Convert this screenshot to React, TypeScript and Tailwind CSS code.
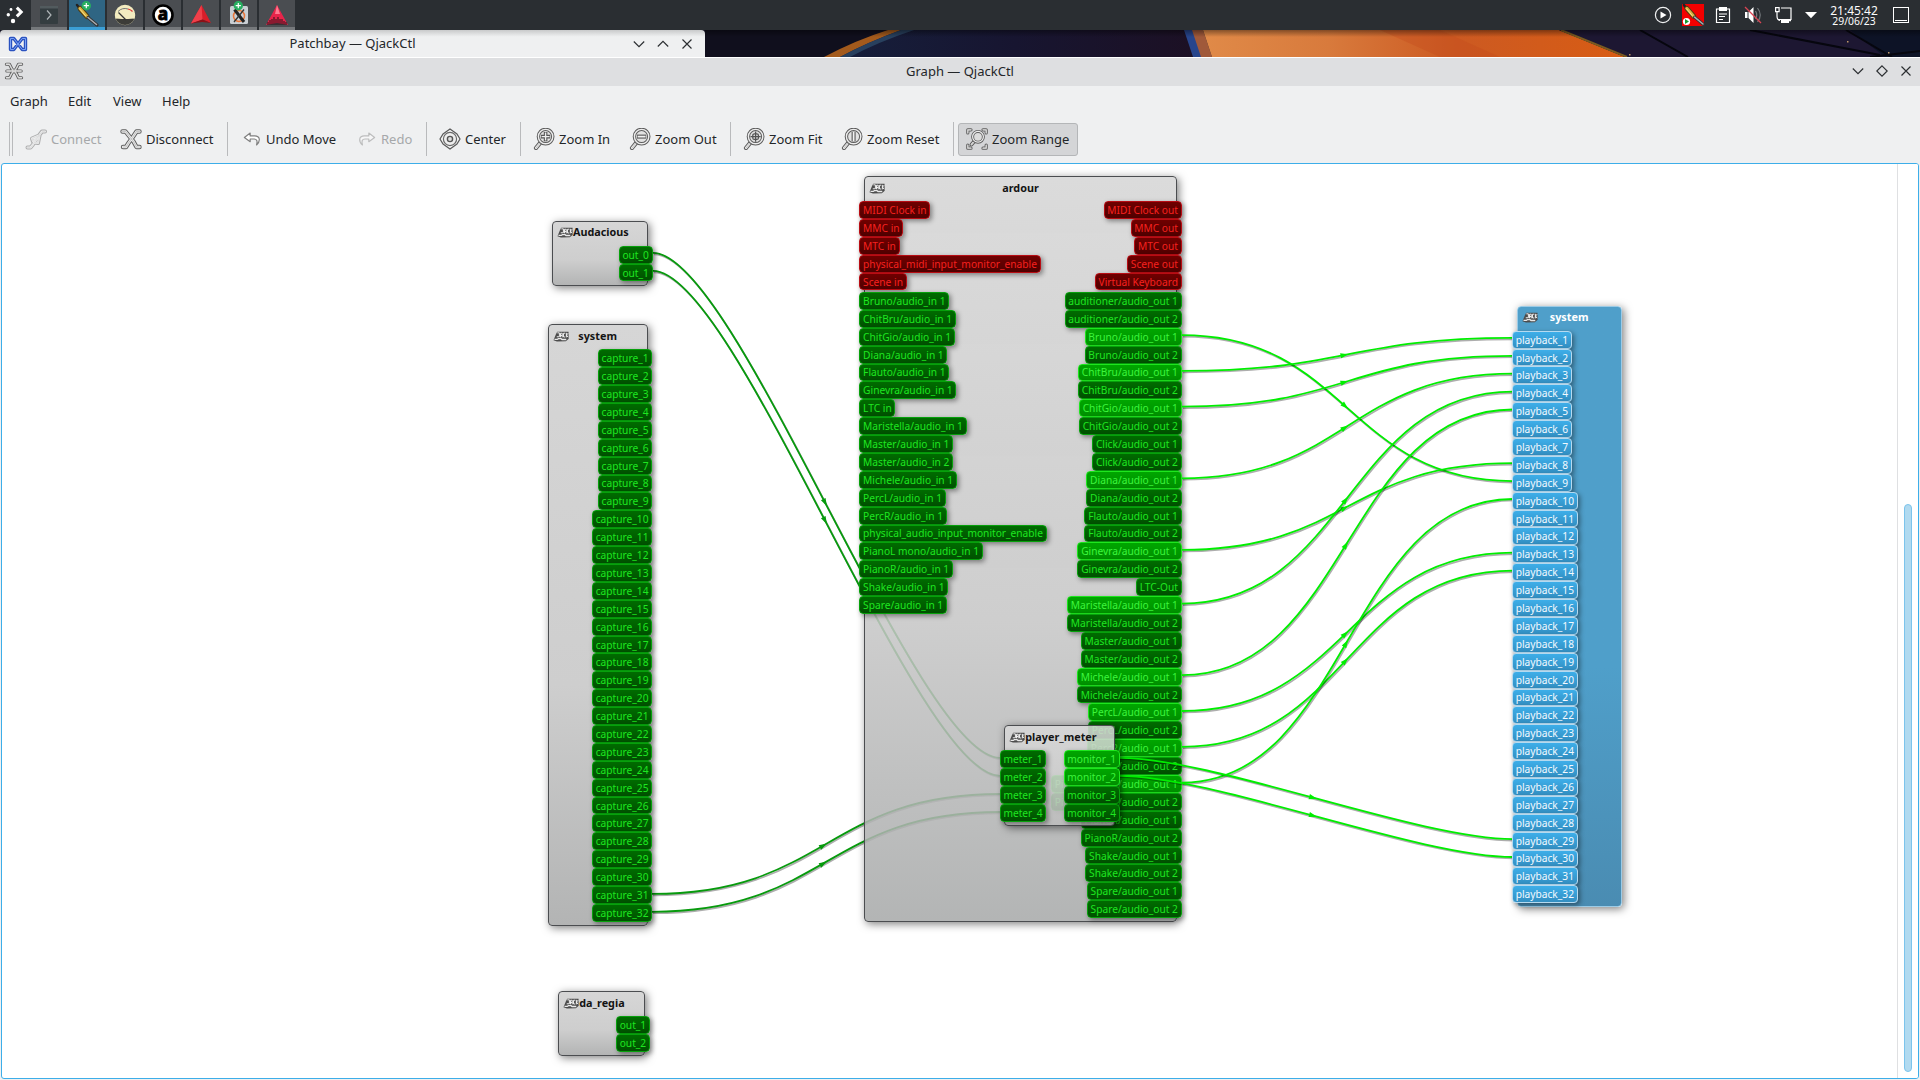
import React from "react";

type PortKind = "midi" | "audio" | "live" | "selected";
type Port = { name: string; kind: PortKind };

const ORIGIN_X = 2;
const ORIGIN_Y = 164;

const portStyle: Record<PortKind, string> = {
  midi: "border-[#b80d14] from-[#700000] to-[#500000] text-[#f6201f]",
  audio: "border-[#07a00c] from-[#006c00] to-[#005000] text-[#1fe621]",
  live: "border-[#1ee61e] from-[#00a600] to-[#009000] text-[#3df53d]",
  selected: "border-[#b5daf0] from-[#3daee9] to-[#338fc2] text-[#f4faff]",
};

const ports = (names: string[], kind: PortKind): Port[] => names.map((name) => ({ name, kind }));
const series = (prefix: string, from: number, to: number, kind: PortKind): Port[] =>
  Array.from({ length: to - from + 1 }, (_, i) => ({ name: `${prefix}${from + i}`, kind }));

const PORT_H = 17.9;

function PortBox({ port, gap }: { port: Port; gap: boolean }) {
  return (
    <div
      className={`box-border flex h-[17.9px] shrink-0 items-center whitespace-nowrap rounded-[4px] border bg-linear-to-b px-[2.7px] text-[10.2px] leading-[16px] shadow-[2px_2px_5px_rgba(0,0,0,0.42)] ${portStyle[port.kind]} ${gap ? "mt-[1.5px]" : ""}`}
    >
      {port.name}
    </div>
  );
}

function PortColumn({ list, side }: { list: Port[]; side: "left" | "right" }) {
  return (
    <div className={`flex w-1/2 flex-col ${side === "left" ? "items-start" : "items-end"}`}>
      {list.map((p, i) => (
        <PortBox key={p.name} port={p} gap={i > 0 && list[i - 1].kind === "midi" && p.kind !== "midi"} />
      ))}
    </div>
  );
}

function JackIcon() {
  return (
    <svg width="16" height="11" viewBox="0 0 17 11" className="shrink-0">
      <path d="M.5 9.600 3 3.500 4.500.4h12L16.700 8l-3 2.600-9.500.2Z" fill="#4c4c4c" />
      <path d="M4.600 1.600h2.200v4.200H4M8 6.400V2h1.800v4.400M8 4.400h1.800M13 2h-1.800v4h1.800M14.200 1.600v4.800M16 2l-1.600 2L16 6.200" fill="none" stroke="#fafafa" strokeWidth="1" />
      <path d="M1.600 8.600h3l1-.8h3l1 .9h4.500" fill="none" stroke="#e8e8e8" strokeWidth="1.400" />
    </svg>
  );
}

type NodeProps = {
  title: string;
  x: number;
  y: number;
  w: number;
  h: number;
  left?: Port[];
  right?: Port[];
  tone?: string;
  tight?: boolean;
};

function GraphNode({ title, x, y, w, h, left = [], right = [], tone, tight }: NodeProps) {
  const colours = tone ?? "border-[#4b4d50] from-[#d6d6d6] via-[#cecece] to-[#b3b4b4] text-[#141414]";
  return (
    <div
      className={`absolute rounded-[4px] border bg-linear-to-b via-60% shadow-[2px_2px_9px_rgba(0,0,0,0.5)] ${colours}`}
      style={{ left: x - ORIGIN_X, top: y - ORIGIN_Y, width: w, height: h }}
    >
      <div className="relative flex h-[24px] items-center pb-[2px] pl-[4px]">
        <JackIcon />
        {tight ? (
          <span className="text-[10.8px] font-bold leading-none">{title}</span>
        ) : (
          <span className="absolute inset-x-0 text-center text-[10.8px] font-bold leading-none">{title}</span>
        )}
      </div>
      <div className="-mx-[5.6px] flex">
        <PortColumn list={left} side="left" />
        <PortColumn list={right} side="right" />
      </div>
    </div>
  );
}

type Wire = [number, number, number, number];

function Wires({ wires, colour, bend = 0.5 }: { wires: Wire[]; colour: string; bend?: number }) {
  return (
    <svg className="absolute left-0 top-0" width="1916" height="914" viewBox="2 164 1916 914">
      {wires.map(([x0, y0, x1, y1]) => {
        const off = (x1 - x0) * bend;
        const d = `M${x0} ${y0}C${x0 + off} ${y0} ${x1 - off} ${y1} ${x1} ${y1}`;
        const angle = (Math.atan2(y1 - y0, (x1 - x0) * (1 - bend)) * 180) / Math.PI;
        return (
          <g key={d} fill="none">
            <path d={d} stroke="#000" strokeOpacity=".32" strokeWidth="1.8" transform="translate(1 1.4)" />
            <path d={d} stroke={colour} strokeWidth="1.8" />
            <path
              d="M-7 -2.6 1 0 -7 2.6Z"
              fill={colour}
              transform={`translate(${(x0 + x1) / 2} ${(y0 + y1) / 2}) rotate(${angle})`}
            />
          </g>
        );
      })}
    </svg>
  );
}

const capture = (n: number) => 349.3 + (n - 1) * PORT_H + 7.6;
const playback = (n: number) => 330.3 + (n - 1) * PORT_H + 7.6;
const ardourOut = (i: number) => 291.7 + i * PORT_H + 7.6;

const playerWires: Wire[] = [
  [653, 252.9, 1000, 757.8],
  [653, 270.9, 1000, 775.8],
];
const captureWires: Wire[] = [
  [652, capture(31), 1000, 794],
  [652, capture(32), 1000, 812],
];

const ardourLinks: [number, number][] = [
  [2, 9], [4, 1], [6, 2], [10, 3], [14, 8], [17, 4], [21, 5], [23, 13], [25, 14], [27, 10],
];
const ardourWires: Wire[] = ardourLinks.map(([o, p]) => [1182, ardourOut(o), 1513, playback(p)]);
const monitorWires: Wire[] = [
  [1119, 757.8, 1513, playback(29)],
  [1119, 775.8, 1513, playback(30)],
];

const ardourIn: Port[] = [
  ...ports(["MIDI Clock in", "MMC in", "MTC in", "physical_midi_input_monitor_enable", "Scene in"], "midi"),
  ...ports(
    [
      "Bruno/audio_in 1", "ChitBru/audio_in 1", "ChitGio/audio_in 1", "Diana/audio_in 1", "Flauto/audio_in 1",
      "Ginevra/audio_in 1", "LTC in", "Maristella/audio_in 1", "Master/audio_in 1", "Master/audio_in 2",
      "Michele/audio_in 1", "PercL/audio_in 1", "PercR/audio_in 1", "physical_audio_input_monitor_enable",
      "PianoL mono/audio_in 1", "PianoR/audio_in 1", "Shake/audio_in 1", "Spare/audio_in 1",
    ],
    "audio",
  ),
];

const outNames = [
  "auditioner/audio_out 1", "auditioner/audio_out 2", "Bruno/audio_out 1", "Bruno/audio_out 2",
  "ChitBru/audio_out 1", "ChitBru/audio_out 2", "ChitGio/audio_out 1", "ChitGio/audio_out 2",
  "Click/audio_out 1", "Click/audio_out 2", "Diana/audio_out 1", "Diana/audio_out 2",
  "Flauto/audio_out 1", "Flauto/audio_out 2", "Ginevra/audio_out 1", "Ginevra/audio_out 2", "LTC-Out",
  "Maristella/audio_out 1", "Maristella/audio_out 2", "Master/audio_out 1", "Master/audio_out 2",
  "Michele/audio_out 1", "Michele/audio_out 2", "PercL/audio_out 1", "PercL/audio_out 2",
  "PercR/audio_out 1", "PercR/audio_out 2", "PianoL mono/audio_out 1", "PianoL mono/audio_out 2",
  "PianoR/audio_out 1", "PianoR/audio_out 2", "Shake/audio_out 1", "Shake/audio_out 2",
  "Spare/audio_out 1", "Spare/audio_out 2",
];
const ardourOutPorts: Port[] = [
  ...ports(["MIDI Clock out", "MMC out", "MTC out", "Scene out", "Virtual Keyboard"], "midi"),
  ...outNames.map((name, i): Port => ({ name, kind: ardourLinks.some(([o]) => o === i) ? "live" : "audio" })),
];

/* ---------- toolbar icons ---------- */

function Outlined({ d, w = 2 }: { d: string; w?: number }) {
  return (
    <g fill="none" strokeLinecap="round" strokeLinejoin="round">
      <path d={d} stroke="#5e5e5e" strokeWidth={w + 2} />
      <path d={d} stroke="#f0f0f0" strokeWidth={w} />
      <path d={d} stroke="#c4c4c4" strokeWidth={w * 0.45} />
    </g>
  );
}

function ToolIcon({ name }: { name: string }) {
  const glass = (
    <>
      <Outlined d="M3 20 7.4 14.6" w={2.2} />
      <circle cx="12.6" cy="8.6" r="7.2" fill="#e2e2e2" stroke="#5c5c5c" strokeWidth="3.4" />
      <circle cx="12.6" cy="8.6" r="7.2" fill="none" stroke="#ededed" strokeWidth="1.4" />
    </>
  );
  const body: Record<string, React.ReactNode> = {
    connect: <Outlined d="M2.500 19.500h3l2.500-3 6-9 3-4h3M8 13.500l-1-3 7-3M10 14.500l3 .5 1.500-7.500M8.500 13 13 8.500" w={2} />,
    disconnect: <Outlined d="M2.500 3.500h3l4 5 4 5 3 5.500h3M19.500 3.500h-3l-4 6-4 5.500-2.500 4h-3" w={2.4} />,
    undo: (
      <path d="M9 4.500 2.600 9.300 9 14v-3h4.200c3.200 0 4 2.200 2.800 6.600 4.600-4.200 4-10-2-10H9Z" fill="#fff" stroke="#808080" strokeWidth="1.300" strokeLinejoin="round" />
    ),
    redo: (
      <path d="M13 4.500 19.400 9.300 13 14v-3H8.800c-3.200 0-4 2.200-2.800 6.600-4.600-4.200-4-10 2-10H13Z" fill="#fff" stroke="#808080" strokeWidth="1.300" strokeLinejoin="round" />
    ),
    center: (
      <>
        <path d="M11 1 14.500 3.500 18 6l3 5-3 5-3.500 2.500L11 21l-3.500-2.500L4 16l-3-5 3-5 3.500-2.500Z" fill="#f4f4f4" stroke="#5c5c5c" strokeWidth="1.300" strokeLinejoin="round" />
        <circle cx="11" cy="11" r="6.600" fill="#eee" stroke="#6a6a6a" strokeWidth="1.200" />
        <circle cx="11" cy="11" r="2.600" fill="#ddd" stroke="#555" strokeWidth="1.400" />
      </>
    ),
    in: <>{glass}<path d="M12.600 4v9.200M8 8.600h9.200" stroke="#555" strokeWidth="3.600" /><path d="M12.600 4.600v8M8.600 8.600h8" stroke="#eee" strokeWidth="1.400" /></>,
    out: <>{glass}<path d="M8 8.600h9.200" stroke="#555" strokeWidth="4" /><path d="M8.600 8.600h8" stroke="#f2f2f2" strokeWidth="1.800" /></>,
    fit: <>{glass}<path d="M7.500 8.600h10.200M12.600 3.500v10.200" stroke="#555" strokeWidth="1.300" /><rect x="9.800" y="5.800" width="5.600" height="5.600" rx="1.500" fill="none" stroke="#555" strokeWidth="1.300" /></>,
    reset: <>{glass}<path d="M12.600 3.800v9.600" stroke="#555" strokeWidth="4" /><path d="M12.600 4v9.200" stroke="#f2f2f2" strokeWidth="1.800" /></>,
    range: (
      <>
        <Outlined d="M1.800 5V1.800H5M17 1.800h3.200V5M1.800 17v3.200H5M17 20.200h3.200V17" w={1.2} />
        <Outlined d="M5.500 16.500 8.600 13" w={1.8} />
        <circle cx="12" cy="8.800" r="5.400" fill="#dcdcdc" stroke="#5e5e5e" strokeWidth="3" />
        <circle cx="12" cy="8.800" r="5.400" fill="none" stroke="#eee" strokeWidth="1.200" />
      </>
    ),
  };
  const small = name === "undo" || name === "redo";
  return (
    <svg width={small ? 20 : 22} height="22" viewBox="0 0 22 22" className="block shrink-0">
      {body[name]}
    </svg>
  );
}

function ToolButton({ icon, label, pos, disabled, active }: { icon: string; label: string; pos: string; disabled?: boolean; active?: boolean }) {
  return (
    <div
      className={`flex h-[33px] shrink-0 items-center gap-[4px] whitespace-nowrap ${pos} ${disabled ? "text-[#a6a8aa]" : ""} ${active ? "rounded-[3px] border border-[#b4b6b8] bg-[#d4d5d7]" : ""}`}
    >
      <span className={disabled ? "opacity-45" : ""}>
        <ToolIcon name={icon} />
      </span>
      <span className="pt-[1px]">{label}</span>
    </div>
  );
}

const Sep = ({ pos }: { pos: string }) => <div className={`h-[34px] w-px shrink-0 bg-[#b9babc] ${pos}`} />;

function Glyph({ d, size = 12 }: { d: string; size?: number }) {
  return (
    <svg width={size} height={size} viewBox="0 0 12 12" fill="none" stroke="#2b2e31" strokeWidth="1.15">
      <path d={d} />
    </svg>
  );
}

/* ---------- panel ---------- */

const PlusBadge = ({ x, y }: { x: number; y: number }) => (
  <g>
    <circle cx={x} cy={y} r="4.700" fill="#27ae60" />
    <path d={`M${x - 2.6} ${y}h5.200M${x} ${y - 2.6}v5.200`} stroke="#fff" strokeWidth="1.200" />
  </g>
);

function Task({ active, children }: { active?: boolean; children: React.ReactNode }) {
  return (
    <div className={`h-[30px] w-[36px] shrink-0 border-b-[3px] ${active ? "border-[#3b9fd6] bg-[#2f6583]" : "border-[#75787b] bg-[#4a4d51]"}`}>
      <svg width="36" height="30" viewBox="0 0 36 30" className="block">
        {children}
      </svg>
    </div>
  );
}

const Plug = () => (
  <g strokeLinecap="round">
    <path d="M8 5 12 10" stroke="#222" strokeWidth="2.500" />
    <path d="M11 8.500 18 16.500" stroke="#4d3a10" strokeWidth="5" />
    <path d="M11 8.500 18 16.500" stroke="#d8b040" strokeWidth="3.200" />
    <path d="M10.800 9 16.500 15.800" stroke="#f6e08c" strokeWidth="1" />
    <path d="M19 17.500 28 25" stroke="#333" strokeWidth="3.200" />
    <path d="M19 17.500 27.500 24.500" stroke="#a9adb0" strokeWidth="1.500" />
  </g>
);

function Panel() {
  return (
    <div className="flex h-[30px] w-full shrink-0 items-center bg-[#2a2e32]">
      <svg width="31" height="30" viewBox="0 0 31 30" fill="#fff" className="shrink-0">
        <circle cx="11" cy="9.500" r="1.400" />
        <circle cx="8.300" cy="14.800" r="1.700" />
        <circle cx="13" cy="21" r="2.200" />
        <path d="M16.800 7.600 21.200 12 16.800 16.400" fill="none" stroke="#fff" strokeWidth="3" />
      </svg>
      <div className="flex gap-[2px]">
        <Task>
          <rect x="9" y="6" width="18" height="18" rx="1" fill="#343d40" />
          <rect x="9" y="6" width="18" height="2.500" fill="#525b5e" />
          <path d="M16 10.500 20 15l-4 4.500" fill="none" stroke="#aeb4b6" strokeWidth="1.200" />
        </Task>
        <Task active>
          <Plug />
          <PlusBadge x={17.3} y={5.7} />
        </Task>
        <Task>
          <circle cx="18" cy="15" r="10.200" fill="#f3ecc0" />
          <path d="M8.500 18.500a10.200 10.200 0 0 0 19 0L18 16Z" fill="#3c3c38" />
          <path d="M8.600 18.400 15 19l6 0 6.400-.6A10 10 0 0 0 28 13l-20 .5Z" fill="#f3ecc0" />
          <path d="M11 11.500a10 10 0 0 1 10-2.500" fill="none" stroke="#777" strokeWidth="1" />
          <path d="M21 9a9 9 0 0 1 4.500 2.500" fill="none" stroke="#d33" strokeWidth="1.200" />
          <path d="M11.500 12.500 19 20" stroke="#333" strokeWidth="1.200" />
        </Task>
        <Task>
          <circle cx="18" cy="15" r="9.500" fill="#fff" stroke="#000" strokeWidth="2.600" />
          <text x="18" y="20" textAnchor="middle" fontSize="17" fontWeight="800" fill="#000" stroke="#000" strokeWidth=".8" fontFamily="Noto Sans, sans-serif">
            a
          </text>
        </Task>
        <Task>
          <path d="M18.500 5 28 23l-8.500-3.500L8 23.500Z" fill="#d81e2a" />
          <path d="M18.500 5 19.500 19.500 8 23.500Z" fill="#f0404a" />
          <path d="M8 23.500 19.500 19.500 28 23 19 22Z" fill="#8e1016" />
        </Task>
        <Task>
          <rect x="9" y="6" width="18" height="18" rx="1.500" fill="#c9ced3" />
          <circle cx="18" cy="16" r="5.500" fill="none" stroke="#e8763a" strokeWidth="1.500" />
          <path d="M13.500 9.500 23 22" stroke="#222" strokeWidth="3" />
          <path d="M23 9.500 13 22" stroke="#333" strokeWidth="1.300" />
          <PlusBadge x={17.3} y={5.7} />
        </Task>
        <Task>
          <path d="M18 5 29 25 18 23 7 25Z" fill="#e8244a" />
          <path d="M18 5 21 14h-5Z" fill="#ff7a90" />
          <path d="M9 25v-3M11 25v-5M13 25v-6M15 25v-8M17 25v-6M19 25v-8M21 25v-6M23 25v-6M25 25v-4M27 25v-3" stroke="#2c1016" strokeWidth="1" />
        </Task>
      </div>
      <div className="ml-auto flex h-[30px] items-center">
        <svg width="178" height="30" viewBox="1649 0 178 30" fill="none">
          <circle cx="1663" cy="15" r="7.600" stroke="#eff0f1" strokeWidth="1.200" />
          <path d="M1660.500 11.500 1666.500 15l-6 3.500Z" fill="#fff" />
          <rect x="1682" y="4" width="22" height="22" fill="#f40000" />
          <g transform="translate(1676 0) scale(.98)"><Plug /></g>
          <circle cx="1686.500" cy="21.500" r="3.600" fill="#fff" />
          <path d="M1685 19 1689 21.500 1685 24Z" fill="#169b2d" />
          <path d="M1716.500 9h13v13.500h-13Z" stroke="#fff" strokeWidth="1.200" />
          <path d="M1719 7h8v4h-8ZM1719 13.500h8v1h-8ZM1719 16h6v1h-6ZM1719 19h4v1h-4Z" fill="#fff" />
          <path d="M1745 12h2.500v6h-2.500ZM1748.500 12l5-5v16l-5-5Z" fill="#fff" />
          <path d="M1755.500 11q2.500 4 0 8M1757.500 8q5.500 7 0 14" stroke="#75797c" strokeWidth="1.200" />
          <path d="M1745 7 1761 23" stroke="#da4453" strokeWidth="1.200" />
          <path d="M1781 8h10v11.500h-13M1775.600 7.600h3.500v4h-3.500ZM1777 12v4q0 4 3 4.500" stroke="#fff" strokeWidth="1.200" />
          <path d="M1781 20h10v1.200h-2V23h-8Z" fill="#fff" />
          <path d="M1805 12h12l-6 6.200Z" fill="#fff" />
        </svg>
        <div className="flex w-[54px] flex-col items-center text-[#fcfcfc]">
          <span className="text-[12px] leading-[11px]">21:45:42</span>
          <span className="text-[10.4px] leading-[10px]">29/06/23</span>
        </div>
        <svg width="39" height="30" viewBox="1881 0 39 30" fill="none">
          <rect x="1893.500" y="7.500" width="15" height="15" stroke="#fff" />
          <path d="M1895 20.500h12" stroke="#fff" />
        </svg>
      </div>
    </div>
  );
}

function Wallpaper() {
  return (
    <svg width="1215" height="27" viewBox="705 30 1215 27" preserveAspectRatio="none" className="block shrink-0">
      <defs>
        <linearGradient id="flame">
          <stop offset="0" stopColor="#e08a48" />
          <stop offset=".3" stopColor="#d87a3c" />
          <stop offset=".6" stopColor="#cc5a22" />
          <stop offset="1" stopColor="#d85c14" />
        </linearGradient>
        <linearGradient id="night">
          <stop offset="0" stopColor="#161f3c" />
          <stop offset=".5" stopColor="#171530" />
          <stop offset="1" stopColor="#1c1024" />
        </linearGradient>
        <linearGradient id="fade" x2="0" y2="1">
          <stop offset="0" stopOpacity=".4" />
          <stop offset="1" stopOpacity="0" />
        </linearGradient>
      </defs>
      <rect x="705" y="30" width="1215" height="27" fill="#100f1d" />
      <path d="M900 30H1190L1200 57H830Z" fill="url(#night)" />
      <path d="M888 30H901Q868 42 840 57H824Q856 40 888 30Z" fill="#a35a1c" />
      <path d="M901 30H914Q878 42 850 57H840Q868 42 901 30Z" fill="#28405e" />
      <path d="M1184 30H1194L1203 57H1193Z" fill="#27458c" />
      <path d="M1192 30H1203L1212 57H1201Z" fill="#a0593a" />
      <path d="M1203 30H1559L1625 57H1212Z" fill="url(#flame)" />
      <path d="M1380 30 1440 57H1500L1440 30Z" fill="#c34a1c" opacity=".35" />
      <path d="M1559 30H1920V57H1625Z" fill="#1d1732" />
      <path d="M1850 30H1920V57H1885Z" fill="#0d1326" />
      <path d="M1561 30 1627 57" stroke="#7a5a20" strokeWidth="2" />
      <path d="M1640 30 1688 57M1750 30 1880 55M1846 30 1892 57M1870 57 1920 51" stroke="#06060e" strokeWidth="2" />
      <path d="M1847 41h1.500v1.500h-1.500ZM1888 52h1.500v1.500h-1.500ZM1629 54h1.500v1.500h-1.500Z" fill="#c09868" />
      <rect x="705" y="30" width="1215" height="7" fill="url(#fade)" />
    </svg>
  );
}

const CLOSE = "M1.500 1.500 10.500 10.500M10.500 1.500 1.500 10.500";
const DOWN = "M.8 3.500 6 8.700 11.200 3.500";
const BOWTIE = "M2.500 2.500v11h3.300l8.400-11h3.300v11h-3.300L5.800 2.500Z";

export default function App() {
  return (
    <div className="flex h-[1080px] w-[1920px] flex-col overflow-hidden bg-[#eff0f1] font-['Noto_Sans',sans-serif] text-[13px] text-[#232629]">
      <Panel />
      <div className="flex h-[27px] shrink-0 bg-[#12101f]">
        <div className="relative flex h-[27px] w-[705px] items-center justify-center rounded-t-[4px] bg-linear-to-b from-[#c9cacb] via-[#eff0f1] via-25% to-[#eff0f1] pt-[1px]">
          <svg width="20" height="16" viewBox="0 0 20 16" className="absolute left-[8px] top-[6px]">
            <path d={BOWTIE} fill="none" stroke="#2a52c0" strokeWidth="3.400" strokeLinejoin="round" />
            <path d={BOWTIE} fill="none" stroke="#7ba2f4" strokeWidth="1" strokeLinejoin="round" />
          </svg>
          <span>Patchbay — QjackCtl</span>
          <div className="absolute right-[12px] top-[8px] flex gap-[12px]">
            <Glyph d={DOWN} />
            <Glyph d="M.8 8.500 6 3.300 11.200 8.500" />
            <Glyph d={CLOSE} />
          </div>
        </div>
        <Wallpaper />
      </div>

      <div className="relative flex h-[29px] shrink-0 items-center justify-center border-t border-white bg-[#dedfe1]">
        <svg width="20" height="18" viewBox="0 0 22 20" className="absolute left-[4px] top-[4px]">
          <Outlined d="M2.500 2.500H6L8.500 7.500M19.500 2.500H16L13.500 7.500M2.500 17.500H6L8.500 12.500M19.500 17.500H16L13.500 12.500M3 10h4l4-.5 4 .5h4M8.500 7.500l5 5M13.500 7.500l-5 5" w={1.4} />
        </svg>
        <span>Graph — QjackCtl</span>
        <div className="absolute right-[8px] top-[7px] flex gap-[12px]">
          <Glyph d={DOWN} />
          <Glyph d="M6 .8 11.200 6 6 11.200.8 6Z" />
          <Glyph d={CLOSE} />
        </div>
      </div>

      <div className="flex h-[31px] shrink-0 items-center pl-[10px]">
        <span className="w-[58px]">Graph</span>
        <span className="w-[45px]">Edit</span>
        <span className="w-[49px]">View</span>
        <span>Help</span>
      </div>

      <div className="flex h-[46px] shrink-0 items-center pb-[2px] pl-[9px]">
        <Sep pos="" />
        <Sep pos="ml-[2px]" />
        <ToolButton icon="connect" label="Connect" pos="ml-[12px] w-[95px]" disabled />
        <ToolButton icon="disconnect" label="Disconnect" pos="w-[107px]" />
        <Sep pos="" />
        <ToolButton icon="undo" label="Undo Move" pos="ml-[14px] w-[115px]" />
        <ToolButton icon="redo" label="Redo" pos="w-[69px]" disabled />
        <Sep pos="" />
        <ToolButton icon="center" label="Center" pos="ml-[12px] w-[81px]" />
        <Sep pos="" />
        <ToolButton icon="in" label="Zoom In" pos="ml-[12px] w-[96px]" />
        <ToolButton icon="out" label="Zoom Out" pos="w-[101px]" />
        <Sep pos="" />
        <ToolButton icon="fit" label="Zoom Fit" pos="ml-[12px] w-[98px]" />
        <ToolButton icon="reset" label="Zoom Reset" pos="w-[112px]" />
        <Sep pos="" />
        <ToolButton icon="range" label="Zoom Range" pos="ml-[4px] w-[120px] pl-[7px]" active />
      </div>

      <div className="ml-px flex h-[916px] w-[1918px] shrink-0 overflow-hidden rounded-[3px] border border-[#3daee9] bg-white">
        <div className="relative h-[914px] w-[1895px] shrink-0 overflow-hidden">
          <Wires wires={playerWires} colour="#079a0d" bend={0.24} />
          <Wires wires={captureWires} colour="#079a0d" />
          <GraphNode title="Audacious" x={552} y={220.7} w={96} h={65} tight right={series("out_", 0, 1, "audio")} />
          <GraphNode title="system" x={547.6} y={324.3} w={100} h={602} right={series("capture_", 1, 32, "audio")} />
          <GraphNode title="da_regia" x={558.3} y={991} w={87} h={65} tight right={series("out_", 1, 2, "audio")} />
          <GraphNode
            title="ardour"
            x={864}
            y={176}
            w={313}
            h={746.3}
            tone="border-[#4b4d50] from-[#d6d6d6e0] via-[#c6c6c6dc] to-[#a7a9a9dc] text-[#141414]"
            left={ardourIn}
            right={ardourOutPorts}
          />
          <Wires wires={ardourWires} colour="#00ee00" />
          <Wires wires={monitorWires} colour="#00ee00" bend={0.24} />
          <GraphNode
            title="player_meter"
            x={1004.3}
            y={725}
            w={111}
            h={101}
            tight
            tone="border-[#4b4d50] from-[#d8d8d8dc] via-[#cececedc] to-[#bcbcbcdc] text-[#141414]"
            left={series("meter_", 1, 4, "audio")}
            right={[...series("monitor_", 1, 2, "live"), ...series("monitor_", 3, 4, "audio")]}
          />
          <GraphNode
            title="system"
            x={1516.6}
            y={305.7}
            w={105}
            h={601}
            tone="border-[#9ccbe6] from-[#4f9fca] via-[#4f9fca] to-[#4a8cb2] text-white"
            left={series("playback_", 1, 32, "selected")}
          />
        </div>
        <div className="flex flex-1 justify-center border-l border-[#dfe0e2] bg-white">
          <div className="mt-[340px] h-[568px] w-[8px] rounded-full border border-[#7cc4ec] bg-[#b1daf0]" />
        </div>
      </div>
    </div>
  );
}
